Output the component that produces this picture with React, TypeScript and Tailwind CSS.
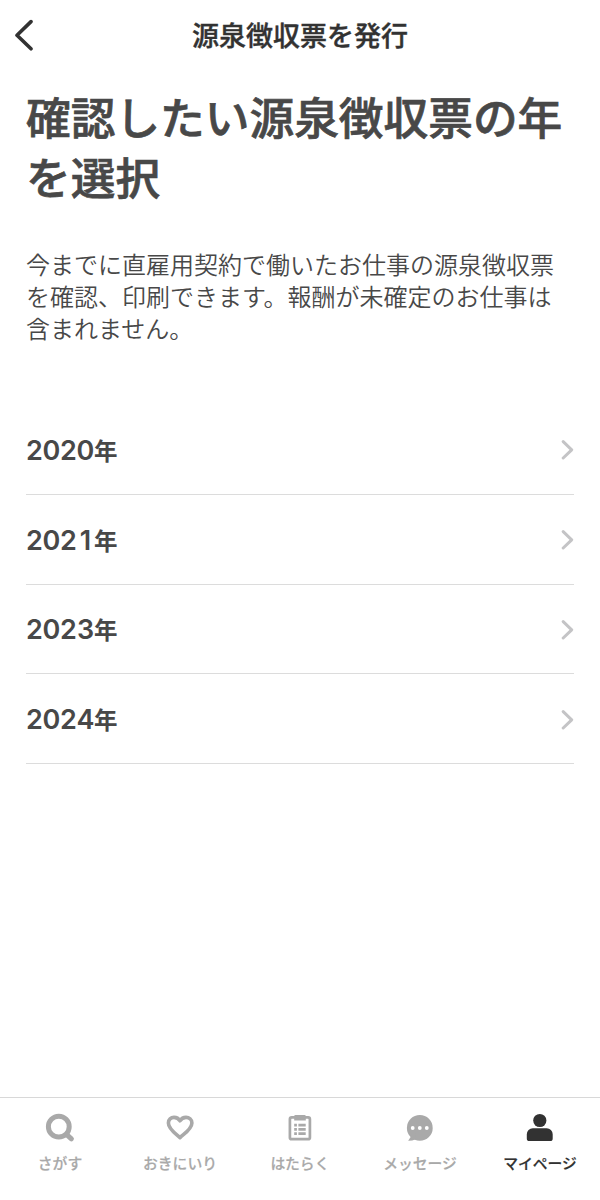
import type { ReactNode } from "react";

const YEARS = [2020, 2021, 2023, 2024];

const TABS: { label: string; icon: ReactNode; active?: boolean }[] = [
  { label: "さがす", icon: <SearchIcon /> },
  { label: "おきにいり", icon: <HeartIcon /> },
  { label: "はたらく", icon: <ClipboardIcon /> },
  { label: "メッセージ", icon: <MessageIcon /> },
  { label: "マイページ", icon: <PersonIcon />, active: true },
];

function SearchIcon() {
  return (
    <svg className="size-8" viewBox="0 0 32 32" fill="none" stroke="currentColor" aria-hidden="true">
      <circle cx="14.8" cy="14.7" r="10.4" strokeWidth="5" />
      <path d="M23 22.8l4.4 4.1" strokeWidth="5" strokeLinecap="round" />
    </svg>
  );
}

function HeartIcon() {
  return (
    <svg className="size-8" viewBox="0 0 32 32" fill="none" stroke="currentColor" aria-hidden="true">
      <path
        d="M16 25.6C12 21.8 4.4 17 4.4 10.9C4.4 7.6 6.9 5.4 10 5.4C12.6 5.4 14.7 6.6 16 8.8C17.3 6.6 19.4 5.4 22 5.4C25.1 5.4 27.9 7.6 27.9 10.9C27.9 17 20 21.8 16 25.6Z"
        strokeWidth="3.6"
        strokeLinejoin="round"
      />
    </svg>
  );
}

function ClipboardIcon() {
  return (
    <svg className="size-8" viewBox="0 0 32 32" fill="currentColor" aria-hidden="true">
      <rect x="5.9" y="5.4" width="20" height="21.8" rx="1.8" fill="none" stroke="currentColor" strokeWidth="2.7" />
      <path d="M10.2 4.3a1.3 1.3 0 0 1 1.3-1.3h9a1.3 1.3 0 0 1 1.3 1.3V8.6H10.2z" />
      <path d="M10.2 11.8h2.7v2.7h-2.7zM14.4 11.8h7.3v2.7h-7.3zM10.2 16h2.7v2.7h-2.7zM14.4 16h7.3v2.7h-7.3zM10.2 20.3h2.7V23h-2.7zM14.4 20.3h7.3V23h-7.3z" />
    </svg>
  );
}

function MessageIcon() {
  return (
    <svg className="size-8" viewBox="0 0 32 32" fill="currentColor" aria-hidden="true">
      <circle cx="15.8" cy="15.9" r="12.9" />
      <path d="M4.8 21.5L6.8 24.8L4.2 28.7Q8 28.8 11.8 27.2L12 22z" />
      <g fill="white">
        <circle cx="8.7" cy="16" r="1.9" />
        <circle cx="15.8" cy="16" r="1.9" />
        <circle cx="22.8" cy="16" r="1.9" />
      </g>
    </svg>
  );
}

function PersonIcon() {
  return (
    <svg className="size-8" viewBox="0 0 32 32" fill="currentColor" aria-hidden="true">
      <circle cx="15.8" cy="8.5" r="6.6" />
      <path d="M2.8 22.3a6 6 0 0 1 6-6h13.9a6 6 0 0 1 6 6v4.2a2.6 2.6 0 0 1-2.6 2.6H5.4a2.6 2.6 0 0 1-2.6-2.6z" />
    </svg>
  );
}

function YearRow({ year }: { year: number }) {
  return (
    <li className="border-b border-[#dcdcdc]">
      <button type="button" className="flex h-[88.8px] w-full items-center justify-between pt-0.5 text-left">
        <span className="flex items-baseline leading-8">
          {/* equal-width cells keep 年 aligned without the slab-footed tabular 1 */}
          <span className="flex w-[68px] font-['Inter',sans-serif] text-[27px] font-semibold">
            {[...String(year)].map((digit, i) => (
              <span key={i} className="flex w-[17px] justify-center">
                {digit}
              </span>
            ))}
          </span>
          <span className="text-[23.5px] font-bold">年</span>
        </span>
        <svg className="h-5 w-3.5" viewBox="0 0 14 20" fill="none" stroke="#c4c4c6" strokeWidth="3" aria-hidden="true">
          <path d="M3.2 1.6L11.7 9.8L3.2 18" strokeLinecap="round" strokeLinejoin="round" />
        </svg>
      </button>
    </li>
  );
}

export default function App() {
  return (
    <div className="flex h-[1200px] w-[600px] flex-col bg-white font-['Noto_Sans_CJK_JP',sans-serif] text-[#484848]">
      <header className="grid h-[70px] shrink-0 grid-cols-[60px_1fr_60px] items-center text-[#323232]">
        <button type="button" aria-label="戻る" className="pl-3.5">
          <svg className="h-8 w-5" viewBox="0 0 20 32" fill="none" stroke="currentColor" strokeWidth="3.6" aria-hidden="true">
            <path d="M17 2.6L3 16.2L17 29.8" strokeLinecap="round" strokeLinejoin="round" />
          </svg>
        </button>
        <h1 className="pb-px text-center text-[27px] font-medium leading-10 [-webkit-text-stroke:0.4px]">
          源泉徴収票を発行
        </h1>
      </header>

      <main className="flex-1 px-[26px] pt-4">
        <h2 className="whitespace-nowrap text-[44.7px] font-medium leading-[60px] [-webkit-text-stroke:0.7px]">
          確認したい源泉徴収票の年
          <br />
          を選択
        </h2>
        <p className="mt-[42px] whitespace-nowrap text-2xl font-[350] leading-8">
          今までに直雇用契約で働いたお仕事の源泉徴収票
          <br />
          を確認、印刷できます。報酬が未確定のお仕事は
          <br />
          含まれません。
        </p>
        <ul className="mt-[61px]">
          {YEARS.map((year) => (
            <YearRow key={year} year={year} />
          ))}
        </ul>
      </main>

      <nav className="grid h-[103px] shrink-0 grid-cols-5 border-t border-[#d8d8d8]">
        {TABS.map(({ label, icon, active }) => (
          <button
            key={label}
            type="button"
            className={`flex flex-col items-center pt-3.5 ${active ? "text-[#323232]" : "text-[#a9a9a9]"}`}
          >
            {icon}
            <span className="mt-[7px] whitespace-nowrap text-[14.8px] font-medium leading-6 [-webkit-text-stroke:0.2px]">
              {label}
            </span>
          </button>
        ))}
      </nav>
    </div>
  );
}
